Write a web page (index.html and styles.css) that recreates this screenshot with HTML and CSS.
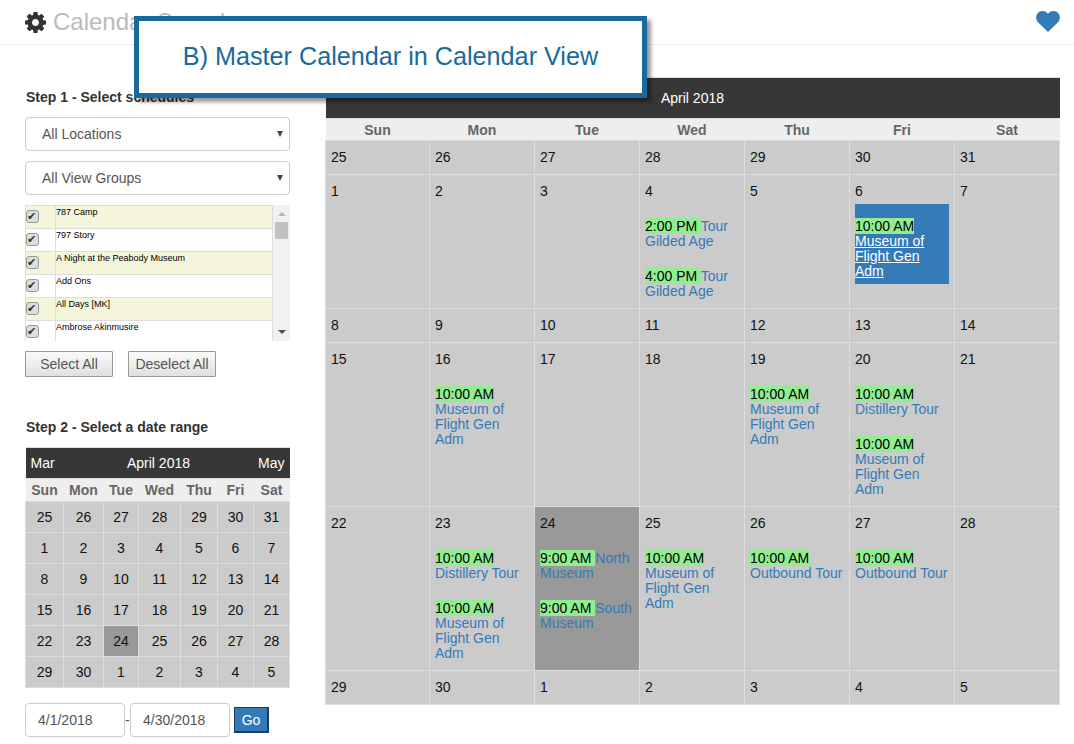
FILE: index.html
```html
<!DOCTYPE html>
<html>
<head>
  <meta charset="UTF-8">
  <title>Calendar Search</title>
  <link rel="stylesheet" href="styles.css">
</head>
<body>
  <div class="topbar">
    <svg class="gear" viewBox="128 128 1536 1536"><path d="M1152 896q0-106-75-181t-181-75-181 75-75 181 75 181 181 75 181-75 75-181zm512-109v222q0 12-8 23t-20 13l-185 28q-19 54-39 91 35 50 107 138 10 12 10 25t-9 23q-27 37-99 108t-94 71q-12 0-26-9l-138-108q-44 23-91 38-16 136-29 186-7 28-36 28h-222q-14 0-24.5-8.5t-11.5-21.5l-28-184q-49-16-90-37l-141 107q-10 9-25 9-14 0-25-11-126-114-165-168-7-10-7-23 0-12 8-23 15-21 51-66.5t54-70.5q-27-50-41-99l-183-27q-13-2-21-12.5t-8-23.5v-222q0-12 8-23t19-13l186-28q14-46 39-92-40-57-107-138-10-12-10-24 0-10 9-23 26-36 98.5-107.5t94.5-71.5q13 0 26 10l138 107q44-23 91-38 16-136 29-186 7-28 36-28h222q14 0 24.5 8.5t11.5 21.5l28 184q49 16 90 37l142-107q9-9 24-9 13 0 25 10 129 119 165 170 7 8 7 22 0 12-8 23-15 21-51 66.5t-54 70.5q26 50 41 98l183 28q13 2 21 12.5t8 23.5z"/></svg>
    <span class="title">Calendar Search</span>
    <svg class="heart" viewBox="0 0 24 21"><path d="M12 21 2 11.2C-1.6 7.4.3 0 6.6 0 9 0 11 1.3 12 3c1-1.700 3-3 5.400-3 6.300 0 8.200 7.400 4.600 11.200z"/></svg>
  </div>

  <div class="callout">B) Master Calendar in Calendar View</div>

  <div class="page">
    <div class="sidebar">
      <h4 class="step">Step 1 - Select schedules</h4>
      <div class="select"><select><option>All Locations</option></select></div>
      <div class="select"><select><option>All View Groups</option></select></div>

      <div class="picklist">
        <div class="rows">
          <label class="row odd"><span class="tick"><input type="checkbox" checked></span><span class="name">787 Camp</span></label>
          <label class="row"><span class="tick"><input type="checkbox" checked></span><span class="name">797 Story</span></label>
          <label class="row odd"><span class="tick"><input type="checkbox" checked></span><span class="name">A Night at the Peabody Museum</span></label>
          <label class="row"><span class="tick"><input type="checkbox" checked></span><span class="name">Add Ons</span></label>
          <label class="row odd"><span class="tick"><input type="checkbox" checked></span><span class="name">All Days [MK]</span></label>
          <label class="row"><span class="tick"><input type="checkbox" checked></span><span class="name">Ambrose Akinmusire</span></label>
        </div>
        <div class="scrollbar">
          <span class="arrow up"></span>
          <span class="thumb"></span>
          <span class="arrow down"></span>
        </div>
      </div>

      <div class="picklist-btns">
        <button class="btn-grey">Select All</button>
        <button class="btn-grey">Deselect All</button>
      </div>

      <h4 class="step step2">Step 2 - Select a date range</h4>
      <table class="mini">
        <colgroup><col class="c1"><col class="c2"><col class="c3"><col class="c4"><col class="c5"><col class="c6"><col class="c7"></colgroup>
        <tr class="head"><td class="prev">Mar</td><td colspan="5">April 2018</td><td class="next">May</td></tr>
        <tr class="dow"><th>Sun</th><th>Mon</th><th>Tue</th><th>Wed</th><th>Thu</th><th>Fri</th><th>Sat</th></tr>
        <tr><td>25</td><td>26</td><td>27</td><td>28</td><td>29</td><td>30</td><td>31</td></tr>
        <tr><td>1</td><td>2</td><td>3</td><td>4</td><td>5</td><td>6</td><td>7</td></tr>
        <tr><td>8</td><td>9</td><td>10</td><td>11</td><td>12</td><td>13</td><td>14</td></tr>
        <tr><td>15</td><td>16</td><td>17</td><td>18</td><td>19</td><td>20</td><td>21</td></tr>
        <tr><td>22</td><td>23</td><td class="today">24</td><td>25</td><td>26</td><td>27</td><td>28</td></tr>
        <tr><td>29</td><td>30</td><td>1</td><td>2</td><td>3</td><td>4</td><td>5</td></tr>
      </table>

      <div class="range">
        <input class="date" type="text" value="4/1/2018">
        <span class="dash">-</span>
        <input class="date" type="text" value="4/30/2018">
        <button class="go">Go</button>
      </div>
    </div>

    <table class="cal">
      <colgroup><col class="first"><col><col><col><col><col><col></colgroup>
      <tr class="head"><td colspan="7">April 2018</td></tr>
      <tr class="dow"><th>Sun</th><th>Mon</th><th>Tue</th><th>Wed</th><th>Thu</th><th>Fri</th><th>Sat</th></tr>
      <tr>
        <td><div class="num">25</div></td><td><div class="num">26</div></td><td><div class="num">27</div></td><td><div class="num">28</div></td><td><div class="num">29</div></td><td><div class="num">30</div></td><td><div class="num">31</div></td>
      </tr>
      <tr>
        <td><div class="num">1</div></td>
        <td><div class="num">2</div></td>
        <td><div class="num">3</div></td>
        <td><div class="num">4</div>
          <div class="event"><span class="time">2:00 PM </span><a href="#">Tour Gilded Age</a></div>
          <div class="event"><span class="time">4:00 PM </span><a href="#">Tour Gilded Age</a></div>
        </td>
        <td><div class="num">5</div></td>
        <td><div class="num">6</div>
          <div class="event active"><span class="time">10:00 AM </span><a href="#">Museum of Flight Gen Adm</a></div>
        </td>
        <td><div class="num">7</div></td>
      </tr>
      <tr>
        <td><div class="num">8</div></td><td><div class="num">9</div></td><td><div class="num">10</div></td><td><div class="num">11</div></td><td><div class="num">12</div></td><td><div class="num">13</div></td><td><div class="num">14</div></td>
      </tr>
      <tr>
        <td><div class="num">15</div></td>
        <td><div class="num">16</div>
          <div class="event"><span class="time">10:00 AM </span><a href="#">Museum of Flight Gen Adm</a></div>
        </td>
        <td><div class="num">17</div></td>
        <td><div class="num">18</div></td>
        <td><div class="num">19</div>
          <div class="event"><span class="time">10:00 AM </span><a href="#">Museum of Flight Gen Adm</a></div>
        </td>
        <td><div class="num">20</div>
          <div class="event"><span class="time">10:00 AM </span><a href="#">Distillery Tour</a></div>
          <div class="event"><span class="time">10:00 AM </span><a href="#">Museum of Flight Gen Adm</a></div>
        </td>
        <td><div class="num">21</div></td>
      </tr>
      <tr>
        <td><div class="num">22</div></td>
        <td><div class="num">23</div>
          <div class="event"><span class="time">10:00 AM </span><a href="#">Distillery Tour</a></div>
          <div class="event"><span class="time">10:00 AM </span><a href="#">Museum of Flight Gen Adm</a></div>
        </td>
        <td class="today"><div class="num">24</div>
          <div class="event"><span class="time">9:00 AM </span><a href="#">North Museum</a></div>
          <div class="event"><span class="time">9:00 AM </span><a href="#">South Museum</a></div>
        </td>
        <td><div class="num">25</div>
          <div class="event"><span class="time">10:00 AM </span><a href="#">Museum of Flight Gen Adm</a></div>
        </td>
        <td><div class="num">26</div>
          <div class="event"><span class="time">10:00 AM </span><a href="#">Outbound Tour</a></div>
        </td>
        <td><div class="num">27</div>
          <div class="event"><span class="time">10:00 AM </span><a href="#">Outbound Tour</a></div>
        </td>
        <td><div class="num">28</div></td>
      </tr>
      <tr>
        <td><div class="num">29</div></td><td><div class="num">30</div></td><td><div class="num">1</div></td><td><div class="num">2</div></td><td><div class="num">3</div></td><td><div class="num">4</div></td><td><div class="num">5</div></td>
      </tr>
    </table>
  </div>
</body>
</html>
```

FILE: styles.css
```css
html, body { margin: 0; padding: 0; height: 744px; overflow: hidden; }
body { font-family: "Liberation Sans", Arial, sans-serif; font-size: 14px; color: #333; background: #fff; }

/* top bar */
.topbar { display: flex; align-items: center; height: 44px; padding: 0 14px 0 25px; border-bottom: 1px solid #eee; }
.gear { width: 21px; height: 21px; fill: #333; margin-right: 7px; }
.title { font-size: 24px; color: #bbb; }
.heart { width: 24px; height: 21px; fill: #337ab7; margin-left: auto; margin-top: -2px; }

/* the annotation laid over the page */
.callout {
  position: absolute;
  left: 134px;
  top: 16px;
  width: 513px;
  height: 82px;
  box-sizing: border-box;
  border: 5px solid #1a699c;
  background: #fff;
  box-shadow: 4px 4px 4px rgba(0, 0, 0, 0.4);
  color: #1a699c;
  font-size: 25.2px;
  line-height: 71px;
  text-align: center;
}

.page { display: flex; padding: 33px 0 0 25px; }
.sidebar { width: 265px; margin-right: 35px; }

.step { margin: 0; font-size: 14px; line-height: 20px; font-weight: bold; padding-left: 1px; height: 20px; padding-top: 9px; margin-bottom: 10px; }
.step2 { margin-top: 30px; padding-top: 10px; margin-bottom: 10px; }

/* selects */
.select { position: relative; margin-bottom: 10px; }
.select select {
  -webkit-appearance: none;
  appearance: none;
  display: block;
  width: 100%;
  height: 34px;
  padding: 0 16px;
  border: 1px solid #ccc;
  border-radius: 4px;
  background: #fff;
  color: #555;
  font: 14px "Liberation Sans", Arial, sans-serif;
}
.select::after {
  content: "";
  position: absolute;
  right: 7px;
  top: 14px;
  border-left: 3px solid transparent;
  border-right: 3px solid transparent;
  border-top: 6px solid #444;
}

/* schedule list */
.picklist { display: flex; height: 136px; overflow: hidden; }
.rows { flex: 1; }
.row { display: flex; height: 22px; border: 1px solid #ddd; border-top: 0; background: #fff; }
.row:first-child { height: 22px; border-top: 1px solid #ddd; }
.row.odd { background: #f5f5dc; }
.tick { width: 29px; border-right: 1px solid #ddd; flex: none; }
.tick input {
  -webkit-appearance: none;
  appearance: none;
  position: relative;
  display: block;
  width: 13px;
  height: 13px;
  margin: 4px 0 0;
  border: 1px solid #999;
  border-radius: 3px;
  background: #ddd;
}
.tick input::after {
  content: "\2714";
  position: absolute;
  left: 0;
  top: -1px;
  font: bold 11px/13px "DejaVu Sans", sans-serif;
  color: #333;
}
.name { font-size: 9px; line-height: 13px; color: #000; }

.scrollbar { position: relative; width: 17px; background: #f1f1f1; flex: none; }
.scrollbar .thumb { position: absolute; left: 2px; top: 17px; width: 13px; height: 17px; background: #c1c1c1; }
.scrollbar .arrow { position: absolute; left: 5px; border-left: 4px solid transparent; border-right: 4px solid transparent; }
.scrollbar .up { top: 7px; border-bottom: 4px solid #b5b5b5; }
.scrollbar .down { bottom: 7px; border-top: 4px solid #505050; }

.picklist-btns { display: flex; gap: 15px; margin-top: 10px; }
.btn-grey {
  width: 88px;
  height: 26px;
  padding: 0;
  border: 1px solid #999;
  border-radius: 1px;
  background: linear-gradient(#fafafa, #e0e0e0);
  color: #555;
  font: 14px "Liberation Sans", Arial, sans-serif;
}

/* small month picker */
.mini { width: 264px; border-collapse: collapse; table-layout: fixed; }
.mini .c1 { width: 38px; } .mini .c2 { width: 40px; } .mini .c3 { width: 35px; } .mini .c4 { width: 42px; }
.mini .c5 { width: 37px; } .mini .c6 { width: 36px; } .mini .c7 { width: 36px; }
.mini td, .mini th { border: 1px solid #ddd; text-align: center; padding: 0; }
.mini td { height: 30px; background: #cbcbcb; color: #111; }
.mini th { height: 22px; background: #eee; color: #666; border-left: 0; border-right: 0; }
.mini .head td { background: #373737; color: #fff; border-left: 0; border-right: 0; }
.mini .head .prev { text-align: left; padding-left: 5px; }
.mini .head .next { text-align: right; padding-right: 5px; }
.mini td.today { background: #999; }

.range { display: flex; align-items: center; margin-top: 15px; }
.date {
  width: 100px;
  height: 34px;
  box-sizing: border-box;
  padding: 0 12px;
  border: 1px solid #ccc;
  border-radius: 4px;
  color: #555;
  font: 14px "Liberation Sans", Arial, sans-serif;
}
.dash { width: 5px; color: #555; }
.go {
  width: 35px;
  height: 26px;
  margin-left: 4px;
  padding: 0;
  border: 1px solid #1d3c5e;
  border-width: 1px 2px 2px 1px;
  background: #337ab7;
  color: #fff;
  font: 14px "Liberation Sans", Arial, sans-serif;
}

/* big calendar */
.cal { width: 735px; height: 0; margin-top: -1px; border-collapse: collapse; table-layout: fixed; align-self: flex-start; }
.cal .first { width: 104px; }
.cal td, .cal th { border: 1px solid #ddd; padding: 0 5px 4px; vertical-align: top; text-align: left; }
.cal td { background: #cbcbcb; color: #111; }
.cal .head td { height: 35px; padding: 0; background: #373737; color: #fff; text-align: center; vertical-align: middle; line-height: 40px; border-left: 0; border-right: 0; }
.cal th { height: 21px; padding: 0; background: #eee; color: #666; text-align: center; vertical-align: middle; border-left: 0; border-right: 0; }
.cal td.today { background: #999; }
.num { height: 23px; padding-top: 6px; line-height: 20px; }
.event { padding: 15px 0 5px; line-height: 15px; }
.event a { color: #337ab7; text-decoration: none; }
.time { background: #90ee90; color: #000; padding: 0; }
.event.active { background: #337ab7; }
.event.active a { color: #fff; text-decoration: underline; }
```
